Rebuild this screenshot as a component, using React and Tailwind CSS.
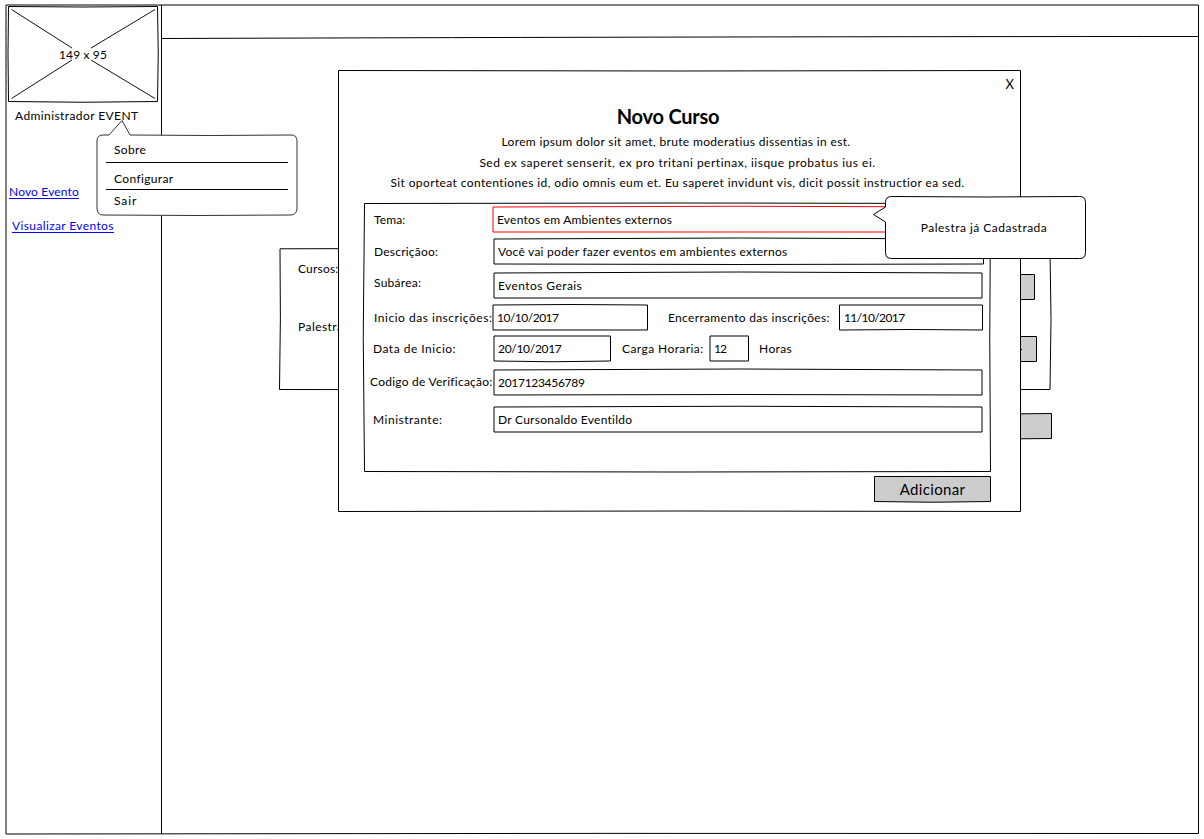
function Frame({ d, stroke = "#000", fill = "none" }) {
  return (
    <svg className="pointer-events-none absolute left-0 top-0 h-full w-full overflow-visible" fill={fill} stroke={stroke} strokeWidth="1" strokeLinejoin="round" aria-hidden="true">
      <path d={d} />
    </svg>
  );
}

function T({ as: Tag = "span", className = "", children }) {
  return <Tag className={`block shrink-0 whitespace-nowrap leading-4 ${className}`}>{children}</Tag>;
}

function Field({ d, stroke, className = "", children }) {
  return (
    <div className={`relative h-[26px] shrink-0 ${className}`}>
      <Frame d={d} stroke={stroke} />
      <div className="relative">{children}</div>
    </div>
  );
}

function Sidebar() {
  return (
    <aside className="relative flex w-[156px] shrink-0 flex-col">
      <Frame d="M155.5 0V829" />
      <div className="relative ml-[2px] mt-[1px] flex h-[96px] w-[150px] items-center justify-center">
        <Frame d="M0.5 0.5Q75 1.5 149.5 0.5Q151 48 149.5 95.5Q75 97 0.5 95.5Q-0.5 48 0.5 0.5Z" />
        <Frame d="M3.5 3.5L64 42M83 42L147 3.5M3.5 92.5L64 54M83 54L147 92.5" stroke="#111" />
        <T className="relative pt-px tracking-[0.13px]">149 x 95</T>
      </div>
      <T className="ml-[9px] mt-[6px] tracking-[0.41px]">Administrador EVENT</T>
      <a className="ml-[3px] mt-[62px] block w-[70px] whitespace-nowrap border-b border-[#0000ff] leading-[12px] tracking-[0.16px] text-[#0000ff]">Novo Evento</a>
      <a className="ml-[6px] mt-[21px] block w-[102px] whitespace-nowrap border-b border-[#0000ff] leading-[12px] tracking-[0.38px] text-[#0000ff]">Visualizar Eventos</a>
    </aside>
  );
}

function CoursePanel() {
  return (
    <section className="relative ml-[117px] mt-[209px] h-[142px] w-[773px]">
      <Frame d="M1 0.8Q386 -1 771 0.8Q773 70 771 141.5Q386 142.5 0.5 141.5Q2 70 1 0.8Z" />
      <div className="relative flex h-[58px] items-start justify-between pl-[19px] pr-[17px] pt-[13px]">
        <T className="tracking-[0.2px]">Cursos:</T>
        <div className="relative mt-[13px] h-[26px] w-[60px]">
          <Frame d="M0.5 0.5H59.5V25.5H0.5Z" fill="#ccc" />
        </div>
      </div>
      <div className="relative flex items-start justify-between pl-[19px] pr-[15px] pt-[13px]">
        <T className="tracking-[0.45px]">Palestras:</T>
        <div className="relative mt-[17px] h-[26px] w-[60px]">
          <Frame d="M0.5 0.5H59.5V25.5H0.5Z" fill="#ccc" />
          <Frame d="M41 13.5H45" />
        </div>
      </div>
      <div className="relative ml-auto mt-[51px] h-[26px] w-[100px]">
        <Frame d="M0.5 1.5L99.5 0.5V25.5Q50 26.5 0.5 25.5Z" fill="#ccc" />
      </div>
    </section>
  );
}

function CourseForm() {
  return (
    <div className="relative ml-[26px] mt-[12px] h-[269px] w-[628px]">
      <Frame d="M0.5 0.5Q313 -0.5 626.5 0.5Q625 135 626.5 268.5Q313 269.5 0.5 268.5Q-2 135 0.5 0.5Z" />
      <div className="relative pt-[3px]">
        <div className="flex h-[32px] items-start">
          <T as="label" className="w-[129px] pl-[10px] pt-[6px] tracking-[0.1px]">Tema:</T>
          <Field className="w-[491px]" d="M0 1Q245 -0.5 490 1V26H0Z" stroke="#ff0000">
            <T className="pl-[4px] pt-[6px] tracking-[0.21px]">Eventos em Ambientes externos</T>
          </Field>
        </div>
        <div className="flex h-[34px] items-start">
          <T as="label" className="w-[129px] pl-[10px] pt-[6px] tracking-[0.22px]">Descriçãoo:</T>
          <Field className="w-[491px]" d="M1 1Q245 -1 490.5 1V26Q245 27 1 26Z">
            <T className="pl-[5px] pt-[6px] tracking-[0.26px]">Você vai poder fazer eventos em ambientes externos</T>
          </Field>
        </div>
        <div className="flex h-[32px] items-start">
          <T as="label" className="w-[129px] pl-[10px] pt-[3px] tracking-[0.25px]">Subárea:</T>
          <Field className="w-[490px]" d="M1 1Q245 -1 489 1V26H1Z">
            <T className="pl-[5px] pt-[6px] tracking-[0.42px]">Eventos Gerais</T>
          </Field>
        </div>
        <div className="flex h-[32px] items-start">
          <T as="label" className="w-[129px] pl-[10px] pt-[6px] tracking-[0.52px]">Inicio das inscrições:</T>
          <Field className="w-[155px]" d="M0 1Q77 0 154.5 1V26H0Z">
            <T className="pl-[4px] pt-[6px] tracking-[-0.5px]">10/10/2017</T>
          </Field>
          <T as="label" className="w-[191px] pl-[20px] pt-[6px] tracking-[0.33px]">Encerramento das inscrições:</T>
          <Field className="w-[144px]" d="M0.5 1H143.5V26Q72 25 0.5 26Z">
            <T className="pl-[5px] pt-[6px] tracking-[-0.6px]">11/10/2017</T>
          </Field>
        </div>
        <div className="flex h-[34px] items-start">
          <T as="label" className="w-[129px] pl-[9px] pt-[5px] tracking-[0.5px]">Data de Inicio:</T>
          <Field className="w-[118px]" d="M1 0H117.5V25Q59 26.5 1 25Z">
            <T className="pl-[5px] pt-[5px] tracking-[-0.3px]">20/10/2017</T>
          </Field>
          <T as="label" className="w-[98px] pl-[11px] pt-[5px] tracking-[0.42px]">Carga Horaria:</T>
          <Field className="w-[39px]" d="M1 0H39.5V25H1Z">
            <T className="pl-[5px] pt-[5px] tracking-[-0.9px]">12</T>
          </Field>
          <T className="pl-[11px] pt-[5px] tracking-[0.4px]">Horas</T>
        </div>
        <div className="flex h-[37px] items-start">
          <T as="label" className="w-[129px] pl-[6px] pt-[4px] tracking-[0.25px]">Codigo de Verificação:</T>
          <Field className="w-[490px]" d="M1 0Q245 -2 489 0V25Q245 24 1 25Z">
            <T className="pl-[5px] pt-[5px] tracking-[-0.3px]">2017123456789</T>
          </Field>
        </div>
        <div className="flex items-start">
          <T as="label" className="w-[129px] pl-[9px] pt-[5px] tracking-[0.5px]">Ministrante:</T>
          <Field className="w-[490px]" d="M1 0Q245 -1.5 489 0V25H1Z">
            <T className="pl-[5px] pt-[5px] tracking-[0.26px]">Dr Cursonaldo Eventildo</T>
          </Field>
        </div>
      </div>
    </div>
  );
}

function CourseDialog() {
  return (
    <div role="dialog" className="absolute left-[338px] top-[70px] flex h-[442px] w-[683px] flex-col bg-white">
      <Frame d="M0.5 0.5Q341 1.5 682.5 0.5V441.5Q341 440.5 0.5 441.5Z" />
      <button className="relative ml-auto mr-[7px] mt-[6px] block text-[13px] leading-4">X</button>
      <h1 className="relative mt-[12px] self-center pr-[23px] text-[20px] font-bold leading-6 tracking-[-0.25px]">Novo Curso</h1>
      <div className="relative flex flex-col items-center pr-[4px]">
        <T as="p" className="mt-[6px] pr-[3px] tracking-[0.34px]">Lorem ipsum dolor sit amet, brute moderatius dissentias in est.</T>
        <T as="p" className="mt-[5px] tracking-[0.5px]">Sed ex saperet senserit, ex pro tritani pertinax, iisque probatus ius ei.</T>
        <T as="p" className="mt-[4px] tracking-[0.39px]">Sit oporteat contentiones id, odio omnis eum et. Eu saperet invidunt vis, dicit possit instructior ea sed.</T>
      </div>
      <CourseForm />
      <button className="relative ml-[536px] mt-[4px] flex h-[26px] w-[117px] items-center justify-center">
        <Frame d="M0.5 0.5H116.5V25.5Q58 27 0.5 25.5Z" fill="#ccc" />
        <span className="relative text-[15px] leading-5 tracking-[0.35px]">Adicionar</span>
      </button>
    </div>
  );
}

function UserMenu() {
  return (
    <div className="absolute left-[97px] top-[135px] h-[81px] w-[201px]">
      <Frame
        fill="#fff"
        stroke="#333"
        d="M6 0H12L25 -14.5L33 0Q113 1 194 0Q200 0 200 6V73Q200 79.5 194 80Q100 81 6 80Q0 80 0 73V6Q0 0 6 0Z"
      />
      <div className="relative ml-[9px] flex w-[182px] flex-col">
        <T className="border-b border-black pb-[4px] pl-[8px] pt-[7px] tracking-[0.35px]">Sobre</T>
        <T className="border-b border-black pb-[2px] pl-[8px] pt-[8px] tracking-[0.36px]">Configurar</T>
        <T className="pl-[8px] pt-[3px] tracking-[0.9px]">Sair</T>
      </div>
    </div>
  );
}

function ErrorBubble() {
  return (
    <div className="absolute left-[885px] top-[196px] flex h-[63px] w-[201px] items-center justify-center">
      <Frame
        fill="#fff"
        d="M6.5 0.5Q100 1.5 194.5 0.5Q200.5 0.5 200.5 6.5V56.5Q200.5 62.5 194.5 62.5H6.5Q0.5 62.5 0.5 56.5V26L-11.5 18.5L0.5 11V6.5Q0.5 0.5 6.5 0.5Z"
      />
      <T className="relative pr-[3px] pt-px tracking-[0.48px]">Palestra já Cadastrada</T>
    </div>
  );
}

export default function App() {
  return (
    <div className="relative h-[839px] w-[1204px] overflow-hidden bg-white pl-[6px] pt-[5px] font-['Lato',sans-serif] text-[12px] text-black">
      <div className="relative flex h-[829px] w-[1193px]">
        <Frame d="M0 0H1192.5V828.5Q596 828 0 829Z" />
        <Sidebar />
        <main className="relative flex grow flex-col">
          <header className="relative h-[34px]">
            <Frame d="M-0.5 33.5Q600 31.5 1036.5 31.5" />
          </header>
          <CoursePanel />
        </main>
      </div>
      <CourseDialog />
      <UserMenu />
      <ErrorBubble />
    </div>
  );
}
